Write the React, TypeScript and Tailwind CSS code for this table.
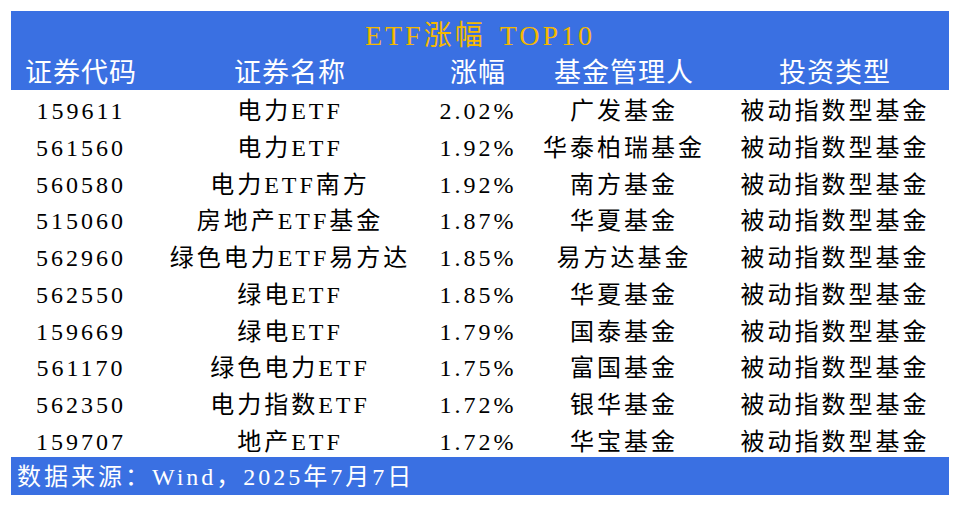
import React from "react";

const rows: [string, string, string, string, string][] = [
  ["159611", "电力ETF", "2.02%", "广发基金", "被动指数型基金"],
  ["561560", "电力ETF", "1.92%", "华泰柏瑞基金", "被动指数型基金"],
  ["560580", "电力ETF南方", "1.92%", "南方基金", "被动指数型基金"],
  ["515060", "房地产ETF基金", "1.87%", "华夏基金", "被动指数型基金"],
  ["562960", "绿色电力ETF易方达", "1.85%", "易方达基金", "被动指数型基金"],
  ["562550", "绿电ETF", "1.85%", "华夏基金", "被动指数型基金"],
  ["159669", "绿电ETF", "1.79%", "国泰基金", "被动指数型基金"],
  ["561170", "绿色电力ETF", "1.75%", "富国基金", "被动指数型基金"],
  ["562350", "电力指数ETF", "1.72%", "银华基金", "被动指数型基金"],
  ["159707", "地产ETF", "1.72%", "华宝基金", "被动指数型基金"],
];

const font = "font-['Liberation_Serif','Noto_Sans_CJK_SC',serif]";
const cols = "grid grid-cols-[140px_278px_98px_194px_228px]";

export default function App() {
  return (
    <div className={`w-[960px] h-[507px] bg-white pt-[11px] pl-[11px] ${font}`}>
      <div className="w-[938px]">
        <div className="bg-[#3a70e2] h-[79px] flex flex-col">
          <div className="h-[46px] pt-[4px] flex items-center justify-center text-[#f5b800] text-[28px] tracking-[3px] leading-none">
            <span>ETF涨幅</span>
            <span className="ml-[14px]">TOP10</span>
          </div>
          <div className={`${cols} flex-1 items-center text-white text-[27px] tracking-[1px] leading-none`}>
            <div className="text-center">证券代码</div>
            <div className="text-center">证券名称</div>
            <div className="text-center">涨幅</div>
            <div className="text-center">基金管理人</div>
            <div className="text-center">投资类型</div>
          </div>
        </div>
        <div className="h-[367px] grid grid-rows-10">
          {rows.map((r) => (
            <div key={r[0]} className={`${cols} items-center pt-[6px] text-black text-[24px] tracking-[3px] leading-none`}>
              {r.map((c, i) => (
                <div key={i} className="text-center whitespace-nowrap">{c}</div>
              ))}
            </div>
          ))}
        </div>
        <div className="h-[38px] bg-[#3a70e2] flex items-center pt-[2px] pl-[6px] text-white text-[24px] tracking-[3px] leading-none">
          数据来源：Wind，2025年7月7日
        </div>
      </div>
    </div>
  );
}
